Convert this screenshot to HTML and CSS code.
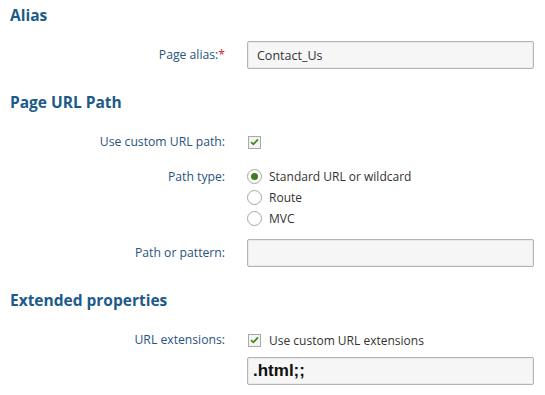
FILE: index.html
```html
<!DOCTYPE html>
<html lang="en">
<head>
    <meta charset="UTF-8">
    <title>Page URL settings</title>
    <link rel="stylesheet" href="styles.css">
</head>
<body>

<div class="page">
    <h2 class="section-title first">Alias</h2>

    <div class="row row-alias">
        <label class="field-label input-label" for="alias">Page alias:<span class="req">*</span></label>
        <input class="text-input" id="alias" type="text" value="Contact_Us">
    </div>

    <h2 class="section-title">Page URL Path</h2>

    <div class="row row-check">
        <span class="field-label check-label">Use custom URL path:</span>
        <div class="check-line">
            <span class="checkbox">
                <svg width="9" height="8" viewBox="0 0 9 8"><path d="M1 4.2 L3.4 6.4 L8 1.4" fill="none" stroke="#3f8a1f" stroke-width="1.7"/></svg>
            </span>
        </div>
    </div>

    <div class="row row-radios">
        <span class="field-label radio-label">Path type:</span>
        <div class="radio-list">
            <div class="radio-item"><span class="radio checked"></span>Standard URL or wildcard</div>
            <div class="radio-item"><span class="radio"></span>Route</div>
            <div class="radio-item"><span class="radio"></span>MVC</div>
        </div>
    </div>

    <div class="row row-pattern">
        <label class="field-label input-label" for="pattern">Path or pattern:</label>
        <input class="text-input" id="pattern" type="text" value="">
    </div>

    <h2 class="section-title">Extended properties</h2>

    <div class="row row-check">
        <span class="field-label check-label">URL extensions:</span>
        <div>
            <div class="check-line">
                <span class="checkbox">
                    <svg width="9" height="8" viewBox="0 0 9 8"><path d="M1 4.2 L3.4 6.4 L8 1.4" fill="none" stroke="#3f8a1f" stroke-width="1.7"/></svg>
                </span>
                Use custom URL extensions
            </div>
            <input class="text-input ext-input" type="text" value=".html;;">
        </div>
    </div>
</div>

</body>
</html>
```

FILE: styles.css
```css
body {
    margin: 0;
    background: #fff;
    font-family: "Open Sans", Arial, sans-serif;
    color: #333;
}

.page {
    padding: 4px 11px 0 10px;
}

.section-title {
    margin: 22px 0 0 0;
    font-size: 15.5px;
    line-height: 22px;
    font-weight: bold;
    color: #1c5a89;
}

.section-title.first {
    margin-top: 0;
}

.row {
    display: grid;
    grid-template-columns: 215px 1fr;
    column-gap: 22px;
    align-items: start;
}

.row-alias {
    margin-top: 15px;
}

.row-check {
    margin-top: 19px;
}

.row-radios {
    margin-top: 14px;
}

.row-pattern {
    margin-top: 10px;
}

.field-label {
    text-align: right;
    font-size: 12.2px;
    color: #285480;
}

.input-label {
    line-height: 28px;
}

.check-label {
    line-height: 20px;
}

.radio-label {
    line-height: 21px;
}

.req {
    color: #d9261c;
}

.text-input {
    display: block;
    width: 100%;
    height: 28px;
    box-sizing: border-box;
    border: 1px solid #b4b4b4;
    border-radius: 2px;
    background: #f6f6f6;
    padding: 0 9px;
    font-family: "Open Sans", Arial, sans-serif;
    font-size: 12.5px;
    color: #333;
    box-shadow: inset 0 0 0 1px #eaeaea;
}

.ext-input {
    margin-top: 7px;
    padding-left: 5px;
    font-family: "Liberation Sans", Arial, sans-serif;
    font-weight: bold;
    font-size: 17px;
    color: #111;
}

.check-line {
    display: flex;
    align-items: center;
    height: 20px;
    font-size: 12px;
    color: #333;
}

.checkbox {
    display: flex;
    align-items: center;
    justify-content: center;
    width: 13px;
    height: 13px;
    box-sizing: border-box;
    border: 1px solid #a9a9a9;
    background: #f4f4f4;
    margin: 0 8px 0 1px;
}

.radio-list {
    display: flex;
    flex-direction: column;
}

.radio-item {
    display: flex;
    align-items: center;
    height: 21px;
    font-size: 12px;
    color: #333;
}

.radio {
    width: 15px;
    height: 15px;
    box-sizing: border-box;
    border: 1px solid #a6a6a6;
    border-radius: 50%;
    background: #fff;
    margin-right: 7px;
    position: relative;
}

.radio.checked::after {
    content: "";
    position: absolute;
    left: 3px;
    top: 3px;
    width: 7px;
    height: 7px;
    border-radius: 50%;
    background: #3c7f1c;
}
```
